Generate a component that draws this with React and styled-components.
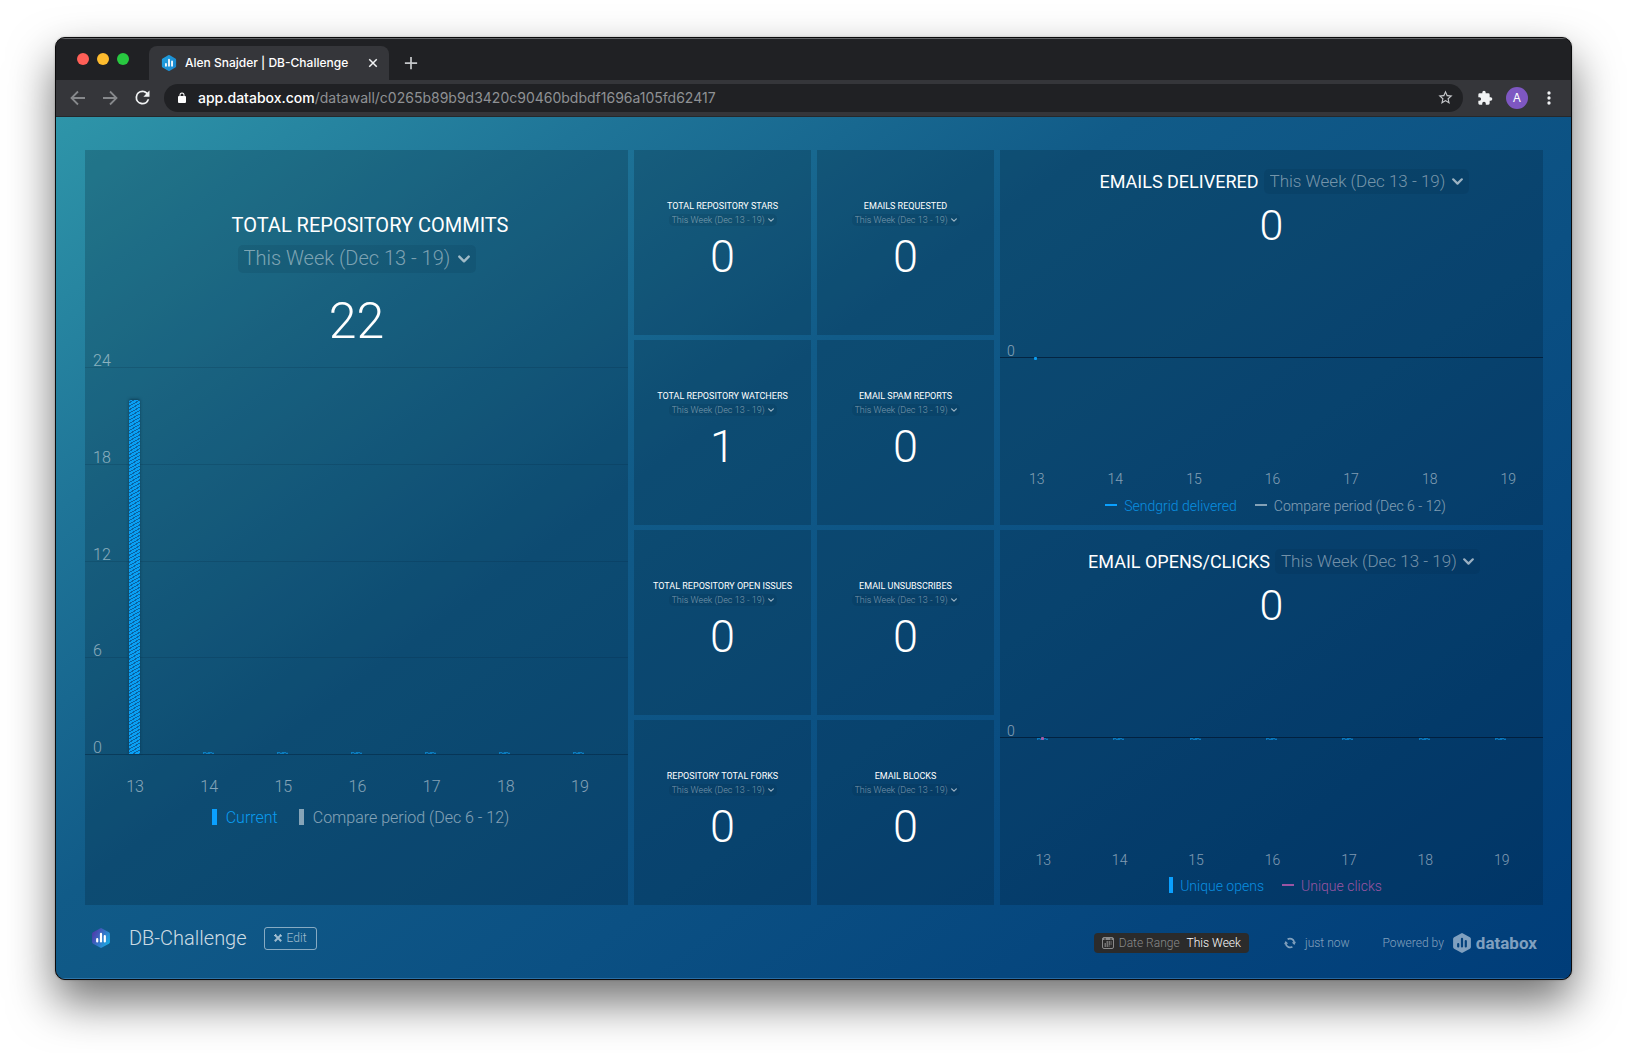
import React from "react";
import styled, { createGlobalStyle, css } from "styled-components";

const Global = createGlobalStyle`
  *, *::before, *::after { box-sizing: border-box; }
  html { background: #fff; }
  body { margin: 0; font-family: Roboto, "Liberation Sans", sans-serif; font-weight: 300; color: #fff; }
  button, input, select { font: inherit; color: inherit; }
  h1, h2, p, ul { margin: 0; padding: 0; font-weight: inherit; }
  ul { list-style: none; }
`;

const Desktop = styled.div`
  display: flex;
  min-height: 100vh;
  padding: 37px 55px 73px;
`;

const Window = styled.div`
  flex: 1;
  min-width: 0;
  display: flex;
  flex-direction: column;
  border: 1px solid #0b0b0c;
  border-radius: 10px;
  overflow: hidden;
  background: #202124;
  box-shadow: 0 22px 46px rgba(0, 0, 0, 0.56), 0 0 2px rgba(0, 0, 0, 0.3);
`;

/* Browser chrome */

const TabStrip = styled.div`
  display: flex;
  align-items: flex-end;
  height: 42px;
  box-shadow: inset 0 1px 0 #636568;
  background: #202124;
  font-family: Inter, Roboto, sans-serif;
`;

const Lights = styled.div`
  display: flex;
  gap: 8px;
  align-self: center;
  padding: 0 20px 0 21px;
`;

const Light = styled.button`
  width: 12px;
  height: 12px;
  padding: 0;
  border: 0;
  border-radius: 50%;
  background: ${(p) => p.$color};
`;

const Tab = styled.div`
  display: flex;
  align-items: center;
  gap: 8px;
  width: 240px;
  height: 34px;
  padding: 0 10px 0 12px;
  border-radius: 8px 8px 0 0;
  background: #35363a;
  font-size: 12px;
  font-weight: 500;
  line-height: 16px;
`;

const TabTitle = styled.span`
  flex: 1;
  white-space: nowrap;
`;

const IconButton = styled.button`
  display: flex;
  align-items: center;
  justify-content: center;
  width: ${(p) => p.$size || 32}px;
  height: ${(p) => p.$height || 28}px;
  padding: 0;
  border: 0;
  background: none;
  color: ${(p) => p.$color || "#f1f3f4"};
`;

const Toolbar = styled.div`
  display: flex;
  align-items: center;
  height: 37px;
  padding: 0 6px 1px;
  border-bottom: 1px solid #26282b;
  background: #35363a;
  font-family: Inter, Roboto, sans-serif;
`;

const AddressBar = styled.div`
  flex: 1;
  display: flex;
  align-items: center;
  gap: 10px;
  height: 28px;
  margin: 0 6px;
  padding: 0 2px 0 12px;
  border-radius: 14px;
  background: #202124;
`;

const Url = styled.a`
  flex: 1;
  color: #8f9194;
  font-size: 14px;
  font-weight: 400;
  line-height: 20px;
  text-decoration: none;
  b { color: #fff; font-weight: 500; }
`;

const Avatar = styled.button`
  width: 22px;
  height: 22px;
  margin: 0 5px;
  padding: 0;
  border: 0;
  border-radius: 50%;
  background: #7e57c2;
  color: #fff;
  font-size: 12px;
  font-weight: 400;
  line-height: 22px;
`;

/* Dashboard */

const Page = styled.div`
  flex: 1;
  display: flex;
  flex-direction: column;
  padding: 33px 28px 0 29px;
  background: linear-gradient(144deg, #2e95a9 0%, #1f7598 20%, #115b88 40%, #0b5083 62%, #05457d 82%, #003d79 100%);
  box-shadow: inset 0 -1px 0 rgba(90, 160, 220, 0.4);
`;

const Board = styled.main`
  flex: 1;
  display: grid;
  grid-template-columns: 543fr 177fr 177fr 543fr;
  grid-template-rows: repeat(4, 1fr);
  gap: 5px 6px;
`;

const Card = styled.section`
  display: flex;
  flex-direction: column;
  align-items: center;
  min-width: 0;
  min-height: 0;
  background: rgba(0, 21, 32, 0.21);
  ${(p) => p.$area && css`grid-area: ${p.$area};`}
  padding-top: ${(p) => p.$top}px;
`;

const Title = styled.h2`
  font-weight: 400;
  font-size: ${(p) => p.$size}px;
  line-height: ${(p) => p.$line}px;
  margin-bottom: ${(p) => p.$gap || 0}px;
  padding-left: ${(p) => p.$inset || 0}px;
  text-transform: uppercase;
  white-space: nowrap;
`;

const PickerBox = styled.label`
  display: inline-flex;
  align-items: center;
  gap: ${(p) => p.$gap}px;
  height: ${(p) => p.$height}px;
  padding: 0 ${(p) => p.$pad}px;
  border-radius: 5px;
  background: rgba(0, 30, 50, 0.1);
  color: rgba(255, 255, 255, 0.45);
  font-size: ${(p) => p.$size}px;
  svg { color: rgba(255, 255, 255, 0.6); }
  select { padding-bottom: ${(p) => p.$lift}px; }
`;

const PickerSelect = styled.select`
  appearance: none;
  margin: 0;
  padding: 0;
  border: 0;
  background: none;
  outline: 0;
`;

const HeadRow = styled.div`
  display: flex;
  align-items: center;
  gap: 5px;
  padding-left: 25px;
`;

const Value = styled.p`
  font-size: ${(p) => p.$size}px;
  line-height: ${(p) => p.$line}px;
  margin-top: ${(p) => p.$top}px;
  font-weight: 300;
`;

const Plot = styled.div`
  width: 100%;
  display: flex;
  flex-direction: column;
  justify-content: space-between;
  position: relative;
  height: ${(p) => p.$height}px;
  margin-top: ${(p) => p.$top}px;
`;

const lineColor = (p) => {
  if (p.$strong) return "rgba(0, 15, 35, 0.6)";
  return p.$base ? "rgba(0, 20, 40, 0.35)" : "rgba(0, 20, 40, 0.14)";
};

const GridLine = styled.div`
  display: flex;
  align-items: flex-end;
  height: 24px;
  padding: 0 ${(p) => p.$pad}px;
  border-bottom: 1px solid ${lineColor};
  color: rgba(255, 255, 255, 0.5);
  font-size: ${(p) => p.$size}px;
  line-height: 12px;
`;

const Bars = styled.div`
  position: absolute;
  inset: 24px 0 ${(p) => p.$lift || 0}px;
  display: grid;
  grid-template-columns: repeat(7, 1fr);
  align-items: end;
  justify-items: center;
  padding: 0 ${(p) => p.$pad}px;
`;

const Bar = styled.div`
  width: 11px;
  min-height: 2px;
  border-radius: ${(p) => (p.$empty ? "0" : "2px 2px 0 0")};
  opacity: ${(p) => (p.$empty ? 0.6 : 1)};
  box-shadow: ${(p) => (p.$empty ? "none" : "0 -1px 3px rgba(0, 30, 50, 0.5)")};
  background: repeating-linear-gradient(150deg, #0aa0f4 0 2px, #0a62a0 2px 3px);
`;

const Dot = styled.i`
  position: absolute;
  left: ${(p) => p.$left}px;
  bottom: -1px;
  width: 3px;
  height: 3px;
  border-radius: 1px;
  background: ${(p) => p.$color};
`;

const Axis = styled.div`
  display: ${(p) => (p.$spread ? "flex" : "grid")};
  justify-content: ${(p) => (p.$spread ? "space-between" : "stretch")};
  grid-template-columns: repeat(7, 1fr);
  width: 100%;
  padding: 0 ${(p) => p.$pad - 1}px 0 ${(p) => p.$pad + 1}px;
  margin-top: ${(p) => p.$top}px;
  color: rgba(255, 255, 255, 0.5);
  font-size: ${(p) => p.$size}px;
  line-height: 20px;
  text-align: center;
`;

const Legend = styled.ul`
  display: flex;
  gap: ${(p) => p.$gap}px;
  margin-top: ${(p) => p.$top}px;
  padding-left: 8px;
  font-size: ${(p) => p.$size}px;
  line-height: 20px;
`;

const LegendItem = styled.li`
  display: flex;
  align-items: center;
  gap: ${(p) => (p.$wide ? 9 : 7)}px;
  color: ${(p) => p.$color};
  &::before {
    content: "";
    width: ${(p) => (p.$bar ? (p.$wide ? 5 : 4) : 12)}px;
    height: ${(p) => (p.$bar ? 16 : 2)}px;
    margin-bottom: 2px;
    background: ${(p) => p.$mark || p.$color};
  }
`;

const Footer = styled.footer`
  display: flex;
  align-items: center;
  height: 74px;
  padding: 0 6px 8px 7px;
  font-size: 12px;
  color: rgba(255, 255, 255, 0.5);
`;

const BoardName = styled.h1`
  margin-left: 19px;
  color: rgba(255, 255, 255, 0.8);
  font-size: 20px;
  line-height: 24px;
`;

const EditButton = styled.button`
  display: flex;
  align-items: center;
  gap: 5px;
  height: 23px;
  margin: 0 auto 0 17px;
  padding: 0 9px;
  border: 1px solid rgba(255, 255, 255, 0.5);
  border-radius: 3px;
  background: none;
  color: rgba(255, 255, 255, 0.6);
`;

const FooterMeta = styled.div`
  display: flex;
  align-items: center;
  padding-top: 10px;
`;

const RangeButton = styled.button`
  display: flex;
  align-items: center;
  gap: 5px;
  height: 20px;
  padding: 0 8px;
  border: 0;
  border-radius: 4px;
  background: #2b2b2b;
  color: #8a8a8a;
  span { display: flex; gap: 7px; }
  b { color: #fff; font-weight: 300; }
`;

const Refresh = styled.button`
  display: flex;
  align-items: center;
  gap: 9px;
  margin: 0 33px 0 35px;
  padding: 0;
  border: 0;
  background: none;
`;

const Brand = styled.a`
  display: flex;
  align-items: center;
  gap: 9px;
  color: inherit;
  text-decoration: none;
  span { display: flex; align-items: center; gap: 5px; color: #80a0bf; }
  b { font-size: 17px; line-height: 20px; font-weight: 700; }
`;

/* Drawings */

const HexLogo = ({ w, h, kind }) => (
  <svg width={w} height={h} viewBox="0 0 18 20" aria-hidden="true">
    <defs>
      <linearGradient id={`hex-${kind}`} x1="0" y1="0.2" x2="1" y2="0.8">
        <stop offset="0" stopColor={kind === "board" ? "#5336a8" : "#1fa0e0"} />
        <stop offset="1" stopColor={kind === "board" ? "#16b0e6" : "#1a86cc"} />
      </linearGradient>
    </defs>
    <path
      d="M8 .4a2 2 0 0 1 2 0l6.9 3.9a2 2 0 0 1 1 1.8v7.8a2 2 0 0 1-1 1.8L10 19.6a2 2 0 0 1-2 0l-6.900-3.900a2 2 0 0 1-1-1.800V6.100a2 2 0 0 1 1-1.800z"
      fill={kind === "brand" ? "#80a0bf" : `url(#hex-${kind})`}
    />
    <g stroke={kind === "brand" ? "#04427c" : "#fff"} strokeWidth="2.200" strokeLinecap="round">
      <path d="M5.200 11.200v2.300M9 5.800v7.700M12.800 8v5.500" />
    </g>
  </svg>
);

const Chevron = ({ size }) => (
  <svg width={size} height={size} viewBox="0 0 12 12" fill="none" stroke="currentColor" strokeWidth="2.400" strokeLinecap="round" strokeLinejoin="round" aria-hidden="true">
    <path d="M1.300 3.600 6 8.300l4.700-4.700" />
  </svg>
);

const Stroke = ({ size = 16, w = 2, d }) => (
  <svg width={size} height={size} viewBox="0 0 16 16" fill="none" stroke="currentColor" strokeWidth={w} aria-hidden="true">
    <path d={d} />
  </svg>
);

const Solid = ({ size = 16, d }) => (
  <svg width={size} height={size} viewBox="0 0 24 24" fill="currentColor" aria-hidden="true">
    <path d={d} />
  </svg>
);

const RELOAD = "M17.650 6.350A7.950 7.950 0 0 0 12 4a8 8 0 1 0 7.730 10h-2.080A6 6 0 1 1 12 6c1.660 0 3.140.69 4.220 1.780L13 11h7V4z";
const LOCK = "M18 8h-1V6A5 5 0 0 0 7 6v2H6a2 2 0 0 0-2 2v10a2 2 0 0 0 2 2h12a2 2 0 0 0 2-2V10a2 2 0 0 0-2-2M9 6a3 3 0 0 1 6 0v2H9z";
const STAR = "m22 9.240-7.190-.62L12 2 9.190 8.630 2 9.240l5.460 4.730L5.820 21 12 17.270 18.180 21l-1.630-7.030zM12 15.400l-3.760 2.270 1-4.280-3.320-2.880 4.380-.38L12 6.100l1.710 4.040 4.380.38-3.320 2.880 1 4.280z";
const PUZZLE = "M20.500 11H19V7a2 2 0 0 0-2-2h-4V3.500a2.500 2.500 0 0 0-5 0V5H4a2 2 0 0 0-2 2v3.800h1.500a2.700 2.700 0 0 1 0 5.400H2V20a2 2 0 0 0 2 2h3.800v-1.500a2.700 2.700 0 0 1 5.400 0V22H17a2 2 0 0 0 2-2v-4h1.500a2.500 2.500 0 0 0 0-5";
const DOTS = "M12 8a2 2 0 1 0 0-4 2 2 0 0 0 0 4m0 2a2 2 0 1 0 0 4 2 2 0 0 0 0-4m0 6a2 2 0 1 0 0 4 2 2 0 0 0 0-4";

const CalendarIcon = () => (
  <svg width="12" height="12" viewBox="0 0 12 12" fill="none" stroke="currentColor" aria-hidden="true">
    <rect x=".5" y=".5" width="11" height="11" rx="1.500" />
    <path d="M.5 2h2M3.500 2h5M9.500 2h2" strokeWidth="2" />
    <path d="M4.500 5h5M2.500 7h7M2.500 9h5" strokeWidth="1.300" strokeDasharray="1.500 .6" />
  </svg>
);

const SyncIcon = () => (
  <svg width="12" height="12" viewBox="0 0 12 12" fill="none" stroke="currentColor" strokeWidth="1.700" aria-hidden="true">
    <path d="M3.600 2.200A4.400 4.400 0 0 1 10.200 5M8.400 9.800A4.400 4.400 0 0 1 1.800 7" />
    <path d="M0 7.200 1.600 4l2.600 2.600zM12 4.800 10.400 8 7.800 5.400z" fill="currentColor" stroke="none" />
  </svg>
);

const ToolsIcon = () => (
  <svg width="8" height="8" viewBox="0 0 8 8" fill="none" stroke="currentColor" aria-hidden="true">
    <path d="M1 1 7.200 7.200M7 1 .8 7.200" strokeWidth="2" />
    <path d="M0 2.200 2.200 0M5.600 0 8 2.400" strokeWidth="1" />
  </svg>
);

const RANGE = "This Week (Dec 13 - 19)";
const DAYS = [13, 14, 15, 16, 17, 18, 19];

const pickerSizes = {
  s: { $size: 9, $height: 12, $pad: 3, $gap: 2, $lift: 0, chevron: 6 },
  m: { $size: 17, $height: 25, $pad: 6, $gap: 6, $lift: 2, chevron: 11 },
  l: { $size: 20, $height: 28, $pad: 6, $gap: 7, $lift: 2, chevron: 12 },
};

const Picker = ({ size, title }) => {
  const { chevron, ...box } = pickerSizes[size];
  return (
    <PickerBox {...box}>
      <PickerSelect aria-label={`${title} period`} defaultValue={RANGE}>
        <option>{RANGE}</option>
      </PickerSelect>
      <Chevron size={chevron} />
    </PickerBox>
  );
};

const StatCard = ({ title, value }) => (
  <Card $top={50}>
    <Title $size={9} $line={12} $gap={2}>{title}</Title>
    <Picker size="s" title={title} />
    <Value $size={45} $line={52} $top={5}>{value}</Value>
  </Card>
);

const DayAxis = (props) => (
  <Axis {...props}>
    {DAYS.map((d) => <span key={d}>{d}</span>)}
  </Axis>
);

const COMMITS = [22, 0, 0, 0, 0, 0, 0];
const STATS = [
  ["Total repository stars", 0],
  ["Emails requested", 0],
  ["Total repository watchers", 1],
  ["Email spam reports", 0],
  ["Total repository open issues", 0],
  ["Email unsubscribes", 0],
  ["Repository total forks", 0],
  ["Email blocks", 0],
];
const GREY = "rgba(255, 255, 255, 0.5)";

export default function App() {
  return (
    <>
      <Global />
      <Desktop>
        <Window>
          <TabStrip>
            <Lights>
              <Light $color="#ff5f57" aria-label="Close window" />
              <Light $color="#febc2e" aria-label="Minimise window" />
              <Light $color="#28c840" aria-label="Zoom window" />
            </Lights>
            <Tab>
              <HexLogo w={16} h={16} kind="tab" />
              <TabTitle>Alen Snajder | DB-Challenge</TabTitle>
              <IconButton $size={12} $height={12} aria-label="Close tab">
                <Stroke size={12} w={2} d="M3 3l10 10M13 3 3 13" />
              </IconButton>
            </Tab>
            <IconButton $size={44} $height={34} $color="#c4c6c9" aria-label="New tab">
              <Stroke size={14} w={2} d="M8 1v14M1 8h14" />
            </IconButton>
          </TabStrip>
          <Toolbar>
            <IconButton $color="#86888b" aria-label="Back"><Stroke w={1.800} d="M15 8H2M8 1.500 1.500 8 8 14.500" /></IconButton>
            <IconButton $color="#86888b" aria-label="Forward"><Stroke w={1.800} d="M1 8h13M8 1.500 14.500 8 8 14.500" /></IconButton>
            <IconButton aria-label="Reload"><Solid size={21} d={RELOAD} /></IconButton>
            <AddressBar>
              <Solid size={12} d={LOCK} />
              <Url href="#"><b>app.databox.com</b>/datawall/c0265b89b9d3420c90460bdbdf1696a105fd62417</Url>
              <IconButton $color="#c4c6c9" aria-label="Bookmark"><Solid size={17} d={STAR} /></IconButton>
            </AddressBar>
            <IconButton aria-label="Extensions"><Solid d={PUZZLE} /></IconButton>
            <Avatar>A</Avatar>
            <IconButton aria-label="Menu"><Solid size={20} d={DOTS} /></IconButton>
          </Toolbar>
          <Page>
            <Board>
              <Card $area="1 / 1 / 5 / 2" $top={63}>
                <Title $size={20} $line={24} $inset={27} $gap={8}>Total repository commits</Title>
                <Picker size="l" title="Total repository commits" />
                <Value $size={50} $line={56} $top={20}>22</Value>
                <Plot $height={411} $top={-5}>
                  {[24, 18, 12, 6, 0].map((n) => (
                    <GridLine key={n} $pad={8} $size={16} $base={n === 0}>{n}</GridLine>
                  ))}
                  <Bars $pad={12} $lift={1}>
                    {COMMITS.map((n, i) => (
                      <Bar key={i} $empty={n === 0} style={{ height: `${(n / 24) * 100}%` }} />
                    ))}
                  </Bars>
                </Plot>
                <DayAxis $pad={12} $top={22} $size={16} />
                <Legend $gap={21} $top={11} $size={16}>
                  <LegendItem $bar $wide $color="#0a9cf0" $mark="#0aa0ff">Current</LegendItem>
                  <LegendItem $bar $wide $color={GREY}>Compare period (Dec 6 - 12)</LegendItem>
                </Legend>
              </Card>
              {STATS.map(([title, value]) => (
                <StatCard key={title} title={title} value={value} />
              ))}
              <Card $area="1 / 4 / 3 / 5" $top={19}>
                <HeadRow>
                  <Title $size={18} $line={25}>Emails delivered</Title>
                  <Picker size="m" title="Emails delivered" />
                </HeadRow>
                <Value $size={43} $line={50} $top={6}>0</Value>
                <Plot $height={25} $top={84}>
                  <GridLine $pad={7} $size={14} $strong>0</GridLine>
                  <Dot $left={34} $color="#0a9cf0" />
                </Plot>
                <DayAxis $spread $pad={28} $top={110} $size={14} />
                <Legend $gap={18} $top={7} $size={14}>
                  <LegendItem $color="#0a8fe0" $mark="#0aa0ff">Sendgrid delivered</LegendItem>
                  <LegendItem $color={GREY}>Compare period (Dec 6 - 12)</LegendItem>
                </Legend>
              </Card>
              <Card $area="3 / 4 / 5 / 5" $top={19}>
                <HeadRow>
                  <Title $size={18} $line={25}>Email opens/clicks</Title>
                  <Picker size="m" title="Email opens/clicks" />
                </HeadRow>
                <Value $size={43} $line={50} $top={6}>0</Value>
                <Plot $height={25} $top={84}>
                  <GridLine $pad={7} $size={14} $strong>0</GridLine>
                  <Bars $pad={4}>
                    {DAYS.map((d) => <Bar key={d} $empty />)}
                  </Bars>
                  <Dot $left={41} $color="#a55ba8" />
                </Plot>
                <DayAxis $pad={4} $top={111} $size={14} />
                <Legend $gap={18} $top={6} $size={14}>
                  <LegendItem $bar $color="#0a8fe0" $mark="#0aa0ff">Unique opens</LegendItem>
                  <LegendItem $color="#9b55a3">Unique clicks</LegendItem>
                </Legend>
              </Card>
            </Board>
            <Footer>
              <HexLogo w={18} h={20} kind="board" />
              <BoardName>DB-Challenge</BoardName>
              <EditButton><ToolsIcon />Edit</EditButton>
              <FooterMeta>
                <RangeButton><CalendarIcon /><span>Date Range <b>This Week</b></span></RangeButton>
                <Refresh><SyncIcon />just now</Refresh>
                <Brand href="#">Powered by<span><HexLogo w={18} h={20} kind="brand" /><b>databox</b></span></Brand>
              </FooterMeta>
            </Footer>
          </Page>
        </Window>
      </Desktop>
    </>
  );
}
